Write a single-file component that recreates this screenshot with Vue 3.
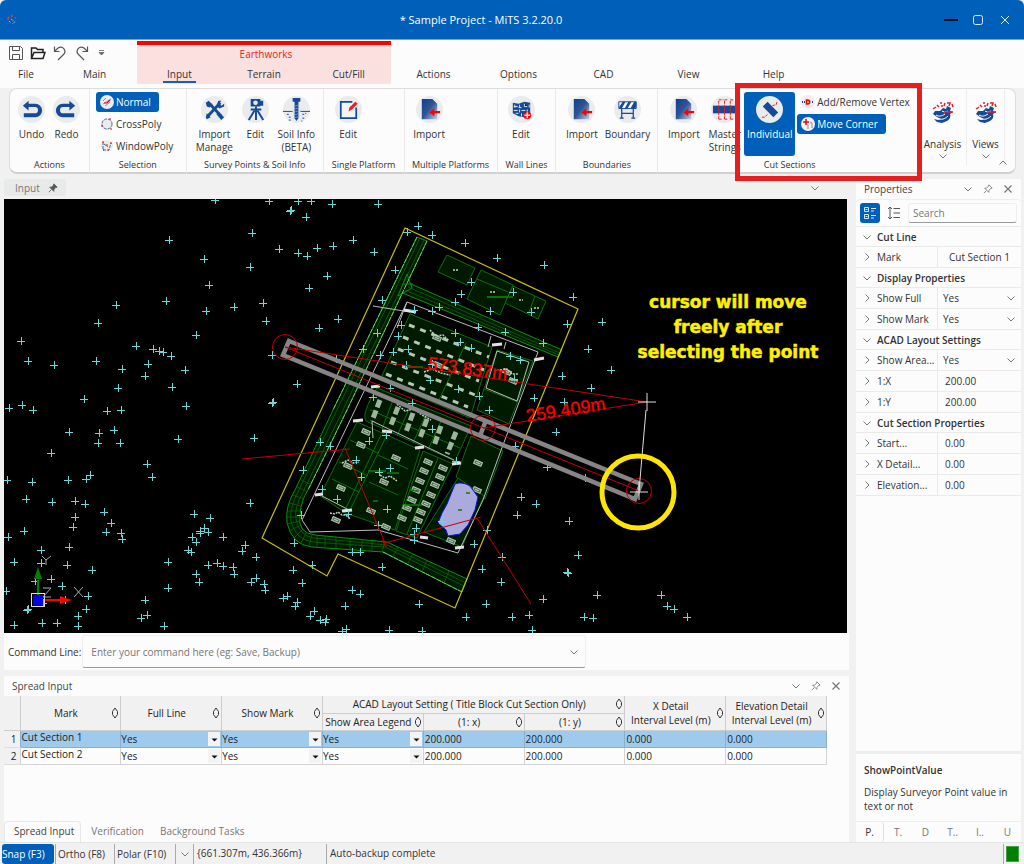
<script setup>
import { ref } from 'vue'

const command = ref('')
const search = ref('')

const tabsLeft = ['File', 'Main']
const tabsContext = ['Input', 'Terrain', 'Cut/Fill']
const tabsRight = ['Actions', 'Options', 'CAD', 'View', 'Help']

const groups = [
  { id: 'actions', label: 'Actions', buttons: [{ icon: 'undo', text: 'Undo' }, { icon: 'redo', text: 'Redo' }] },
  { id: 'selection', label: 'Selection', list: [
    { icon: 'normal', text: 'Normal', on: true },
    { icon: 'cross', text: 'CrossPoly' },
    { icon: 'window', text: 'WindowPoly' }
  ] },
  { id: 'survey-group', label: 'Survey Points & Soil Info', buttons: [
    { icon: 'tools', text: 'Import Manage' },
    { icon: 'tripod', text: 'Edit' },
    { icon: 'soil', text: 'Soil Info (BETA)' }
  ] },
  { id: 'single', label: 'Single Platform', buttons: [{ icon: 'edit', text: 'Edit' }] },
  { id: 'multiple', label: 'Multiple Platforms', buttons: [{ icon: 'import', text: 'Import' }] },
  { id: 'wall', label: 'Wall Lines', buttons: [{ icon: 'wall', text: 'Edit' }] },
  { id: 'bounds', label: 'Boundaries', buttons: [{ icon: 'import', text: 'Import' }, { icon: 'barrier', text: 'Boundary' }] },
  { id: 'master', label: '', buttons: [{ icon: 'import', text: 'Import' }, { icon: 'strings', text: 'Master Strings' }] },
  { id: 'cut', label: 'Cut Sections', buttons: [{ icon: 'individual', text: 'Individual', on: true }], list: [
    { icon: 'vertex', text: 'Add/Remove Vertex' },
    { icon: 'corner', text: 'Move Corner', on: true }
  ] }
]

const properties = [
  { group: 'Cut Line' },
  { name: 'Mark', value: 'Cut Section 1', centered: true },
  { group: 'Display Properties' },
  { name: 'Show Full', value: 'Yes', select: true },
  { name: 'Show Mark', value: 'Yes', select: true },
  { group: 'ACAD Layout Settings' },
  { name: 'Show Area...', value: 'Yes', select: true },
  { name: '1:X', value: '200.00' },
  { name: '1:Y', value: '200.00' },
  { group: 'Cut Section Properties' },
  { name: 'Start...', value: '0.00' },
  { name: 'X Detail...', value: '0.00' },
  { name: 'Elevation...', value: '0.00' }
]

const rows = [
  { mark: 'Cut Section 1', active: true },
  { mark: 'Cut Section 2' }
]
const choices = ['Full Line', 'Show Mark', 'Show Area Legend']
const numbers = ['200.000', '200.000', '0.000', '0.000']

const surveyPoints = [
  215,200,169,240,252,233,204,259,250,267,209,285,116,305,166,301,206,311,234,307,98,323,196,335,21,341,136,346,153,349,159,351,163,352,171,356,28,361,54,365,96,361,148,364,122,369,145,376,185,370,118,388,172,387,84,399,186,406,22,405,9,408,33,410,107,411,121,410,
  69,432,99,433,114,430,98,443,120,443,178,439,254,438,51,453,147,464,152,477,7,480,32,482,68,480,86,479,90,475,26,499,52,502,75,501,85,504,104,512,75,517,111,523,73,527,106,532,121,533,122,539,24,531,8,537,69,547,41,550,14,562,41,563,67,565,92,570,51,579,35,581,62,586,88,596,6,591,86,609,78,616,27,610,28,609,43,603,14,625,42,623,57,623,78,626,250,503,194,514,210,518,204,528,200,531,200,533,208,532,192,537,196,542,223,537,245,545,242,551,256,557,188,550,191,552,168,562,208,565,217,563,223,566,233,567,234,574,196,574,199,582,168,588,251,582,256,578,145,600,141,618,147,615,164,626,65,600,
  269,201,298,201,311,201,332,204,378,204,290,211,291,210,306,217,279,249,298,253,307,256,317,248,333,246,353,240,374,252,395,270,327,276,309,288,263,303,266,321,319,328,338,319,382,300,272,355,297,384,273,402,272,403,418,226,407,232,432,235,414,310,401,325,398,336,377,333,363,349,380,355,393,352,408,349,439,307,432,311,455,302,455,333,406,365,432,364,430,380,390,388,412,403,373,397,458,389,336,359,
  465,243,497,258,544,265,471,282,461,294,513,292,490,311,531,312,573,297,567,324,602,322,478,327,505,332,543,343,588,349,611,370,591,388,562,376,460,342,471,348,510,356,520,360,514,379,479,396,534,398,564,402,489,410,
  320,442,330,446,303,470,322,489,337,499,301,515,348,514,369,441,386,435,356,460,361,477,379,472,390,468,387,509,378,525,416,528,414,534,414,540,294,543,352,552,360,552,382,567,312,565,293,570,302,583,352,590,360,594,345,606,419,604,389,630,422,631,346,629,342,631,264,584,265,590,283,598,287,596,297,602,295,606,314,611,310,616,320,620,326,619,325,622,432,429,456,461,442,521,
  556,432,515,446,547,467,585,478,521,497,536,504,517,515,569,521,487,530,474,544,502,557,578,555,482,569,501,582,567,572,568,573,543,599,597,595,486,604,466,617,512,617,529,615,532,630,584,617,593,618,661,595,667,606,674,609,687,617
]
let crosses = ''
for (let i = 0; i < surveyPoints.length; i += 2) {
  const x = surveyPoints[i]
  const y = surveyPoints[i + 1]
  crosses += `M${x - 4} ${y + 0.5}h8M${x + 0.5} ${y - 4}v8`
}

const lots = [
  [366, 432], [361, 445], [348, 466], [341, 488], [336, 520], [396, 458], [384, 482], [371, 511], [428, 462], [424, 471], [420, 481], [416, 490], [412, 500], [407, 508], [402, 518],
  [443, 468], [440, 477], [435, 485], [431, 495], [426, 504], [421, 512], [418, 520], [386, 527], [478, 463], [477, 490], [451, 541], [507, 372], [513, 381], [438, 365], [437, 338]
]
</script>

<template>
  <div class="app">
    <svg class="defs" aria-hidden="true">
      <defs>
        <linearGradient id="doc" x1="0" y1="0" x2="1" y2="1"><stop offset="0" stop-color="#103f8c" /><stop offset=".5" stop-color="#2d5698" /><stop offset="1" stop-color="#c3cede" /></linearGradient>
        <symbol id="undo" viewBox="0 0 28 28"><path d="M11 5L5 10l6 5v-3.500h6.500a2.800 2.800 0 0 1 0 6.500H6v4h12a7 7 0 0 0 0-14h-7z" fill="#174a94" /></symbol>
        <symbol id="redo" viewBox="0 0 28 28"><path d="M17 5l6 5-6 5v-3.500h-6.500a2.800 2.800 0 0 0 0 6.500H22v4H10a7 7 0 0 1 0-14h7z" fill="#174a94" /></symbol>
        <symbol id="tools" viewBox="0 0 28 28"><path d="M9 8l12 13M20 7L7 21" stroke="#174a94" stroke-width="3" /><path d="M5 7l3-2 4 4-3 3-3-1zM18 5l-2 5 3 3 5-2V8l-3 2-2-2 2-3z" fill="#174a94" /><path d="M18 16l6 6-3 3-5-6zM6 18l4 4-4 2-1-2z" fill="#174a94" /></symbol>
        <symbol id="tripod" viewBox="0 0 28 28"><path d="M9 3h10v2h3v5h-3v1H9zM9 13h11v2H9z" fill="#174a94" /><circle cx="14" cy="7" r="2.400" fill="#e8eaec" /><path d="M13 15L7 25M14.500 11v14M16 15l6 10" stroke="#174a94" stroke-width="2" fill="none" /></symbol>
        <symbol id="soil" viewBox="0 0 28 28"><path d="M0 16h10m8 0h10" stroke="#174a94" /><path d="M10 2h8v4h-2v17l-2 3-2-3V6h-2z" fill="#174a94" /><path d="M11 11l6-2m-6 5l6-2m-6 5l6-2m-6 5l6-2m-6 5l6-2" stroke="#8ba4c8" stroke-width=".8" /><path d="M4 19h2m0 3h2m-2 3h2m12-6h2m1-1h1m-4 5h2m-3 3h1" stroke="#174a94" /></symbol>
        <symbol id="edit" viewBox="0 0 28 28"><path d="M18 6H6v17h16V12" fill="#f2f4f6" stroke="#174a94" stroke-width="1.800" /><path d="M14 16l1-4 6-6 2.500 2-6 6z" fill="#ec1c24" /></symbol>
        <symbol id="import" viewBox="0 0 28 28"><path d="M6 3h11l5 5v16H6z" fill="url(#doc)" /><path d="M25 15.500h-6v-3L14 17l5 4v-3h6z" fill="red" /></symbol>
        <symbol id="wall" viewBox="0 0 28 28"><path d="M5 7l6 1 6-2 6 1v13l-6 2-6-1-6-3z" fill="#174a94" /><path d="M7 9v3m-1-1h4m2-2v3m-1 0h3m3-4v3h3m2-2v3M6 15h4m2-1v3m2-2h4m2-1v3M8 18h3m3 0v3" stroke="#e0e5ed" /><circle cx="20" cy="20" r="4" fill="red" /><path d="M20 17v6m-3-3h6" stroke="#fff" stroke-width="1.500" /></symbol>
        <symbol id="barrier" viewBox="0 0 28 28"><path d="M5 6h18v7H5z" fill="#fff" stroke="#174a94" /><path d="M5 12l4-6h3l-4 7zM11 13l4-7h3l-4 7zM17 13l4-7h2v5l-1 2z" fill="#174a94" /><path d="M8 13v10m12-10v10M8 18h12M6 23h4m8 0h4" stroke="#174a94" stroke-width="1.300" /></symbol>
        <symbol id="strings" viewBox="0 0 28 28"><path d="M2 10h26v8H2z" fill="#174a94" /><path d="M8 24V4h5M14 24V4h4m2 20V4h3M8 24h4m2 0h4m2 0h3" fill="none" stroke="#ec1c24" stroke-dasharray="3 1" /></symbol>
        <symbol id="individual" viewBox="0 0 28 28"><path d="M7 11l5-5 11 11-5 5z" fill="#174a94" /><path d="M17 10l4-1 1-4M6 22h3l3-3" fill="none" stroke="#ec1c24" stroke-dasharray="3 1" /></symbol>
        <symbol id="normal" viewBox="0 0 14 14"><circle cx="7" cy="7" r="7" fill="#ebecef" /><path d="M3 6l3-3m-3 6l8-5M5 11l5-4" stroke="#7b93ba" /><path d="M4 8h3l3-3" stroke="red" stroke-width="1.200" fill="none" /></symbol>
        <symbol id="cross" viewBox="0 0 14 14"><circle cx="7" cy="7" r="6" fill="#eaecee" /><circle cx="7" cy="7" r="5" fill="none" stroke="#5574a8" stroke-dasharray="3 1" /><path d="M9 2h2M1 9h2m7 3h2" stroke="red" /></symbol>
        <symbol id="window" viewBox="0 0 14 14"><circle cx="7" cy="7" r="6" fill="#eaecee" /><path d="M3 3v8h6l2-7M4 5l4 3" fill="none" stroke="#3f65a2" stroke-dasharray="3 1" /><path d="M2 3h2m6 1h2M3 11h1m4 0h1M6 6h2" stroke="red" stroke-width="1.200" /></symbol>
        <symbol id="vertex" viewBox="0 0 14 14"><circle cx="7" cy="7" r="7" fill="#eceeef" /><path d="M1 7h3m7 0h2" stroke="#174a94" stroke-width="2" stroke-dasharray="1 1" /><path d="M5.500 5H7l1.500 1v2L7 9H5.500z" fill="none" stroke="red" stroke-width="1.700" /></symbol>
        <symbol id="corner" viewBox="0 0 14 14"><circle cx="7" cy="7" r="7" fill="#f2f2f4" /><path d="M5 2v6M2 5h6" stroke="red" stroke-width="1.600" /><path d="M9 5l2 1v5M7 8v4" stroke="#7c8cab" fill="none" /></symbol>
        <symbol id="globe" viewBox="0 0 24 24"><path d="M9 11l3-3 3 1 1-3 4 2-1 3 3 1-3 2c1 3 0 5-3 7l-5 2-5-1-3-3 4 1 3-1-4-2-4-3 2-3h4z" fill="#174a94" /><path d="M5 15c3 2 6 1 9-1m-6 5c4 1 7-1 9-3m-6-5c1 1 4 1 6 0" stroke="#fff" fill="none" /><path d="M13 12h9M2 9l3-2m1-2l2 2m1-4h2m-1 3h2m2-3l-1 3m3-3h3l-1 3m3-2l1 3" stroke="#ec1c24" stroke-width="1.500" fill="none" /></symbol>
        <symbol id="chev" viewBox="0 0 10 10"><path d="M1.500 3.500L5 7l3.500-3.500" fill="none" stroke="currentColor" /></symbol>
        <symbol id="pin" viewBox="0 0 12 12"><path d="M7 1l4 4-2 .5L7 8v2L2 5h2l2.500-2zM4 8l-3 3" fill="none" stroke="currentColor" /></symbol>
        <symbol id="close" viewBox="0 0 10 10"><path d="M1.500 1.500l7 7m0-7l-7 7" stroke="currentColor" stroke-width="1.200" /></symbol>
        <symbol id="sort" viewBox="0 0 8 12"><path d="M4 1l2.500 3.500v3L4 11 1.500 7.500v-3z" fill="none" stroke="#333" /></symbol>
      </defs>
    </svg>

    <header class="title">
      <svg class="logo" viewBox="0 0 12 12"><path d="M2 4l2-2m1 0h2m2 1l1 2M1 5h3" stroke="#e33" stroke-width="1.300" stroke-dasharray="2 1" /><path d="M3 7l3 3 4-3M5 5l3 2" stroke="#8fa6dd" fill="none" stroke-dasharray="2 1" /><path d="M5 9l1 1" stroke="red" /></svg>
      <h1>* Sample Project - MiTS 3.2.20.0</h1>
      <div class="window-buttons">
        <button aria-label="Minimize"><svg viewBox="0 0 14 14"><path d="M0 7h14" stroke="#000a20" stroke-width="2" /></svg></button>
        <button aria-label="Maximize"><svg viewBox="0 0 14 14"><rect x="2.500" y="2.500" width="9" height="9" rx="2" fill="none" stroke="#dce8f6" /></svg></button>
        <button aria-label="Close"><svg viewBox="0 0 14 14"><path d="M3 3l8 8m0-8l-8 8" stroke="#e8f0fa" /></svg></button>
      </div>
    </header>

    <nav class="menu">
      <div class="menu-left">
        <div class="quick">
          <button aria-label="Save"><svg viewBox="0 0 16 16"><path d="M1.500 1.500h11l2 2v11h-13zM4.500 1.500v4h7v-4M4.500 14.500v-5h7v5" fill="none" stroke="#555" /></svg></button>
          <button aria-label="Open"><svg viewBox="0 0 16 16"><path d="M1.500 13V3H6l1.500 1.500H13V7M1.500 13.500L4 7.500h11l-2 6z" fill="none" stroke="#222" stroke-width="1.500" /></svg></button>
          <button aria-label="Undo"><svg viewBox="0 0 16 16"><path d="M2.500 1.500v5h5M3 6l3-3c5-3 9 3 5.500 6.500L6 15" fill="none" stroke="#555" stroke-width="1.200" /></svg></button>
          <button aria-label="Redo"><svg viewBox="0 0 16 16"><path d="M13.500 1.500v5h-5M13 6l-3-3C5 0 1 6 4.500 9.500L10 15" fill="none" stroke="#555" stroke-width="1.200" /></svg></button>
          <button aria-label="Customize"><svg viewBox="0 0 16 16"><path d="M3 5.500h5M3 7.500h5L5.500 10z" stroke="#666" fill="#666" stroke-width=".8" /></svg></button>
        </div>
        <div class="tabs"><a v-for="t in tabsLeft" :key="t" href="#">{{ t }}</a></div>
      </div>
      <div class="context">
        <span class="context-name">Earthworks</span>
        <div class="tabs"><a v-for="t in tabsContext" :key="t" href="#" :class="{ current: t === 'Input' }"><span>{{ t }}</span></a></div>
      </div>
      <div class="tabs"><a v-for="t in tabsRight" :key="t" href="#">{{ t }}</a></div>
    </nav>

    <section class="ribbon">
      <div v-for="g in groups" :key="g.id" class="group" :class="g.id">
        <div class="group-body">
          <button v-for="b in g.buttons" :key="b.text" class="big" :class="{ on: b.on }">
            <span class="disc"><svg><use :href="'#' + b.icon" /></svg></span>
            <span>{{ b.text }}</span>
          </button>
          <div v-if="g.list" class="list">
            <button v-for="b in g.list" :key="b.text" :class="{ on: b.on }"><svg><use :href="'#' + b.icon" /></svg>{{ b.text }}</button>
          </div>
        </div>
        <div class="group-label">{{ g.label }}</div>
      </div>
      <div v-for="t in ['Analysis', 'Views']" :key="t" class="drop">
        <button><svg class="globe"><use href="#globe" /></svg><span>{{ t }}</span><svg class="small"><use href="#chev" /></svg></button>
      </div>
      <button class="collapse" aria-label="Collapse ribbon"><svg class="small"><use href="#chev" /></svg></button>
    </section>

    <main class="work">
      <div class="left">
        <div class="doc-tabs">
          <button class="doc-tab">Input <svg viewBox="0 0 12 12"><path d="M7 1l4 4-2 .5L7 8v2L2 5h2l2.500-2z" fill="#555" stroke="#555" /><path d="M4 8l-3 3" stroke="#555" /></svg></button>
          <button class="doc-more" aria-label="Documents"><svg class="small"><use href="#chev" /></svg></button>
        </div>
        <svg class="canvas" viewBox="4 199 843 434" preserveAspectRatio="xMinYMin slice">
          <g class="road">
            <path d="M417 237L333 410 295 490Q285 506 287 523 292 545 312 547L383 552 462 592 467 579 387 542 315 535Q297 533 300 515 301 500 308 490L347 410 427 241z" />
            <path d="M411 284L562 350 558 357 400 292z" />
            <path d="M407 274L412 288 398 296zM403 284h10" />
          </g>
          <path class="lane" d="M420 238L336 412 298 492Q289 508 291 522 296 540 313 542L385 547 464 586M424 240L342 412 303 492Q294 508 296 519 299 536 314 538L387 545 466 583M408 287L560 353M405 290L559 355" />
          <path class="bright" d="M417 237L333 410M427 241L347 410 308 490M383 552L462 592" />
          <path class="ribs" d="M301 480l11 5M297 487l11 5M293 495l11 4M289 503l12 3M287 511h13M286 517h13M287 524l13-3M289 531l12-6M294 538l9-9M301 543l5-10M309 546l3-11M317 547v-12M325 548v-12M336 549v-12M350 550v-12M362 551v-12M372 551v-12M382 552l3-10M393 557l5-10M408 563l5-10M422 572l5-12M444 583l5-12" />
          <g class="plot">
            <path d="M447 255L475 268 467 285 438 272z" />
            <path d="M481 270L513 285 500 315 467 299zM477 279L508 292M487 297h26" />
            <path d="M513 286L546 301 538 319 505 303zM535 296L529 312" />
            <path d="M410 314L492 347 470 418 380 380z" />
            <path d="M497 350L533 361 509 424 477 410z" />
            <path d="M377 388L471 426 455 461 366 421Q361 414 377 388z" />
            <path d="M357 422L387 435 349 515 320 496z" />
            <path d="M387 435L420 450 395 530 348 514z" />
            <path d="M423 451L453 464 417 538 396 531z" />
            <path d="M471 436L503 451 485 499 456 477z" />
            <path d="M458 478L484 496 462 547 424 532z" />
            <path d="M350 440L378 453M339 462L368 476M332 479L359 492M381 435L344 512M378 455L408 469M369 482L398 495M438 458L407 534M393 400L382 429M410 407L397 436M426 414L413 443M441 421L428 450M370 410L460 448M466 343L438 402M484 389L518 402" />
          </g>
          <path class="site" d="M407 302L538 352 500 453 483 500 458 553 378 530 310 532 302 520 407 302M407 302L397 328M373 306L410 312M373 438L372 421 454 460M322 496L349 510M491 336L488 347M506 342L504 349M497 351L486 388 517 401 529 362z" />
          <path class="cars" d="M409 325L489 357M403 337L484 370M398 349L479 381M391 362L475 395M386 374L468 407" />
          <path class="trucks" d="M380 400L372 421M398 407L391 425M413 413L406 432M427 419L420 438M441 426L434 446M456 432L447 454" />
          <path class="tags" d="M404 310l12 2M492 345l10-1M534 360l10-2M371 387l9-1M353 421l10-1M382 431l10 1M415 448l9-1M452 464l9-1M315 495l8-1M342 511l10-1M420 537l8 1M455 548l9-1" />
          <g class="lots"><path v-for="(p, i) in lots" :key="i" :transform="`translate(${p[0]} ${p[1]}) rotate(24)`" d="M-4-2h8v4h-8zM-2 0h4" /></g>
          <path class="scribble" d="M330 513l5 1 3-2 4 3 4 0 4 4M342 463l6-3 5 3 6-1M380 475l5 3 5-2 7 5M430 330l6 6 7-1 6 6M424 372l8-3 9 4 9 2M500 370l7-1 5 5 6 0M397 404l8 7 9-2 8 6 9 5" />
          <path class="greens" d="M368 471h18m1 2h12M404 505h18M373 501h5M487 297h26M405 367h18M410 490l8 1M455 510h4M468 492h3" />
          <path class="scribble" d="M453 270h5M490 292h5M519 300h4M534 308h5" />
          <path class="lake" d="M455 484Q462 481 470 486L478 497 475 510 468 525 460 534 448 536 446 530 438 523 442 513 447 504z" />
          <path class="greens" d="M458 510h4M466 493h4" />
          <path class="boundary" d="M405 228L578 309 455 608 338 554 327 576 262 538z" />
          <path class="survey" :d="crosses" />
          <path class="section" d="M289 341L641 484 635 499 283 355zM486 420L480 436" />
          <g class="measure">
            <circle cx="285" cy="347" r="12.500" /><circle cx="483" cy="428" r="12.500" /><circle cx="639" cy="491" r="12.500" />
            <path d="M285 347L639 491M285 347L647 402 483 428M242 459L350 449M345 448L385 543 481 517M477 518L531 604M382 540l4 7" />
          </g>
          <path class="cursor" d="M638 402h18M647 393v18M646 410L639 491M630 492h18M639 482v18" />
          <text class="dim" transform="translate(427 369) rotate(8)">573.837m</text>
          <text class="dim" transform="translate(527 422) rotate(-9)">259.409m</text>
          <circle class="ring" cx="638" cy="492" r="36" />
          <text class="note"><tspan x="728" y="308">cursor will move</tspan><tspan x="728" y="333">freely after</tspan><tspan x="728" y="358">selecting the point</tspan></text>
          <path d="M38 600V580" stroke="#008000" stroke-width="2" /><path d="M38 567l-4 12h8z" fill="#008000" />
          <path d="M44 600h18" stroke="red" stroke-width="2" /><path d="M72 600l-12-4v8z" fill="red" />
          <rect x="31.500" y="593.500" width="13" height="13" fill="none" stroke="#ddd" /><rect x="33" y="595" width="10" height="10" fill="#0000f0" />
          <path class="axes" d="M42 556l4 4 5-4M46 560v5M74 587l9 10m0-10l-9 10M43 588h8l-8 9h8" />
        </svg>
        <div class="command">
          <label for="command">Command Line:</label>
          <div class="command-box"><input id="command" v-model="command" placeholder="Enter your command here (eg: Save, Backup)"><button aria-label="Command history"><svg class="small"><use href="#chev" /></svg></button></div>
        </div>
        <section class="spread">
          <div class="panel-head"><h2>Spread Input</h2><button aria-label="Menu"><svg><use href="#chev" /></svg></button><button aria-label="Pin"><svg><use href="#pin" /></svg></button><button aria-label="Close"><svg><use href="#close" /></svg></button></div>
          <div class="table-wrap">
            <table>
              <colgroup><col class="index"><col v-for="n in 8" :key="n"></colgroup>
              <thead>
                <tr>
                  <th rowspan="2"></th>
                  <th v-for="h in ['Mark', 'Full Line', 'Show Mark']" :key="h" rowspan="2"><div>{{ h }}<svg><use href="#sort" /></svg></div></th>
                  <th colspan="3"><div>ACAD Layout Setting ( Title Block Cut Section Only)<svg><use href="#sort" /></svg></div></th>
                  <th rowspan="2"><div>X Detail<br>Interval Level (m)<svg><use href="#sort" /></svg></div></th>
                  <th rowspan="2"><div>Elevation Detail<br>Interval Level (m)<svg><use href="#sort" /></svg></div></th>
                </tr>
                <tr><th v-for="h in ['Show Area Legend', '(1: x)', '(1: y)']" :key="h"><div>{{ h }}<svg><use href="#sort" /></svg></div></th></tr>
              </thead>
              <tbody>
                <tr v-for="(r, i) in rows" :key="r.mark" :class="{ active: r.active }">
                  <th>{{ i + 1 }}</th>
                  <td class="mark">{{ r.mark }}</td>
                  <td v-for="c in choices" :key="c" class="choice"><div class="pick"><select :aria-label="c"><option>Yes</option><option>No</option></select><svg viewBox="0 0 12 14"><path d="M3.500 6.500h6l-3 3z" fill="#111" /></svg></div></td>
                  <td v-for="(n, k) in numbers" :key="k">{{ n }}</td>
                </tr>
              </tbody>
            </table>
          </div>
          <div class="bottom-tabs"><a href="#" class="current">Spread Input</a><a href="#">Verification</a><a href="#">Background Tasks</a></div>
        </section>
      </div>

      <aside class="props">
        <div class="panel-head"><h2>Properties</h2><button aria-label="Menu"><svg><use href="#chev" /></svg></button><button aria-label="Pin"><svg><use href="#pin" /></svg></button><button aria-label="Close"><svg><use href="#close" /></svg></button></div>
        <div class="props-tools">
          <button class="cat" aria-label="Categorized"><svg viewBox="0 0 14 14"><path d="M1.500 1.500h4v4h-4zM1.500 8.500h4v4h-4zM8 2.500h5M8 5h3M8 9.500h5M8 12h3M2.500 3.500h2m-2 7h2" stroke="#d9e7f7" fill="none" /></svg></button>
          <button class="alpha" aria-label="Alphabetical"><svg viewBox="0 0 14 14"><path d="M3 1v12M1 3l2-2 2 2M1 11l2 2 2-2M6.500 2.500H13M6.500 7H13M6.500 11.500H13" stroke="#555" fill="none" /></svg></button>
          <input v-model="search" placeholder="Search" aria-label="Search properties">
        </div>
        <div class="props-list">
          <template v-for="p in properties" :key="p.group || p.name">
            <div v-if="p.group" class="prop-group"><svg class="small"><use href="#chev" /></svg>{{ p.group }}</div>
            <div v-else class="prop">
              <span class="prop-name"><svg class="small closed"><use href="#chev" /></svg>{{ p.name }}</span>
              <span v-if="p.select" class="prop-select"><select :aria-label="p.name"><option>Yes</option><option>No</option></select><svg class="small"><use href="#chev" /></svg></span>
              <span v-else class="prop-value" :class="{ centered: p.centered }">{{ p.value }}</span>
            </div>
          </template>
        </div>
        <div class="help"><h3>ShowPointValue</h3><p>Display Surveyor Point value in text or not</p></div>
        <div class="side-tabs"><a href="#" class="current">P.</a><a href="#">T.</a><a href="#">D</a><a href="#">T..</a><a href="#">I..</a><a href="#">U</a></div>
      </aside>
    </main>

    <footer class="status">
      <button class="snap">Snap (F3)</button>
      <button class="ortho">Ortho (F8)</button>
      <button class="polar">Polar (F10)</button>
      <button class="more" aria-label="Polar options"><svg class="small"><use href="#chev" /></svg></button>
      <span class="coords">{661.307m, 436.366m}</span>
      <span class="message">Auto-backup complete</span>
      <span class="lamp"><i></i></span>
    </footer>
  </div>
</template>

<style>
body { background: #f1f1f1; }
</style>

<style scoped>
* { box-sizing: border-box; }
.app { min-height: 100vh; display: flex; flex-direction: column; background: #f1f1f1; color: #333; font: 10px/14px "Open Sans", "Noto Sans", sans-serif; }
.defs { position: absolute; width: 0; height: 0; }
button, input, select { font: inherit; color: inherit; border: 0; background: none; padding: 0; margin: 0; outline: 0; }
select { appearance: none; }
a { color: inherit; text-decoration: none; }
h1, h2, h3, p { margin: 0; font: inherit; }
svg { display: block; flex: none; }
.small { width: 10px; height: 10px; color: #777; }

.title { height: 40px; display: flex; align-items: center; justify-content: space-between; background: #005fb8; border-bottom: 1px solid #6ea3d6; color: #fff; padding: 0 12px 0 6px; border-radius: 6px 6px 0 0; }
.title h1 { font-size: 11px; }
.logo { width: 12px; height: 12px; }
.window-buttons { display: flex; gap: 13px; }
.window-buttons svg { width: 14px; height: 14px; }

.menu { display: flex; height: 48px; background: #fcfcfc; align-items: flex-end; }
.menu-left { width: 137px; height: 48px; padding-top: 5px; }
.quick { display: flex; align-items: flex-start; gap: 6px; padding-left: 8px; height: 19px; }
.quick svg { width: 16px; height: 16px; }
.tabs { display: flex; height: 24px; }
.tabs a { width: 85px; text-align: center; padding-top: 3px; }
.menu-left .tabs a:first-child { width: 52px; }
.context { width: 254px; height: 43px; margin-bottom: 4px; background: #fbe0e0; border-top: 4px solid red; display: flex; flex-direction: column; justify-content: space-between; }
.context .tabs { height: 20px; }
.context-name { color: #f02020; text-align: center; padding-top: 2px; padding-left: 4px; }
.current span { display: inline-block; border-bottom: 2px solid #1860b4; padding: 0 4px; height: 16px; }

.ribbon { display: grid; grid-template-columns: 80fr 97fr 137fr 81fr 93fr 59fr 102fr 81fr 180fr 48fr 38fr 10fr; height: 86px; margin: 0 8px 5px 9px; background: #fcfcfc; border: 1px solid #ddd; border-bottom: 2px solid #d0d0d0; border-radius: 8px; }
.ribbon > * { min-width: 0; }
.group { position: relative; display: flex; flex-direction: column; border-right: 1px solid #e9e9e9; }
.group-body { flex: 1; display: flex; padding: 3px 0 0 4px; }
.group-label { height: 17px; text-align: center; white-space: nowrap; font-size: 9px; line-height: 18px; }
.big { width: 41px; height: 64px; padding-top: 4px; display: flex; flex-direction: column; align-items: center; gap: 5px; line-height: 13px; flex: none; }
.actions .big { width: 35px; }
.survey-group .group-body { padding-left: 7px; }
.wall .group-body { padding-left: 3px; }
.bounds .group-body, .master .group-body { padding-left: 5px; }
.bounds .big + .big { width: 50px; }
.disc { width: 27px; height: 27px; border-radius: 50%; background: #e9ebec; flex: none; }
.disc svg { width: 27px; height: 27px; }
.list { display: flex; flex-direction: column; align-items: flex-start; gap: 2px; }
.list button { height: 20px; display: flex; align-items: center; gap: 2px; padding: 0 8px 0 4px; white-space: nowrap; border-radius: 3px; }
.list svg { width: 14px; height: 14px; }
.selection .group-body { padding-left: 6px; }
.on { background: #005fb8; color: #fff; border-radius: 3px; }
.cut .group-body { padding-left: 5px; gap: 2px; }
.cut .big { width: 51px; }
.cut .group-label { padding-right: 78px; }
.cut::after { content: ""; position: absolute; inset: -6px -4px -8px -4px; border: 5px solid #e81e1e; pointer-events: none; }
.drop { border-right: 1px solid #eee; display: flex; justify-content: center; margin-bottom: 8px; }
.drop button { display: flex; flex-direction: column; align-items: center; padding-top: 11px; }
.globe { width: 24px; height: 24px; margin-bottom: 13px; }
.collapse { align-self: end; justify-self: end; transform: rotate(180deg); margin: 0 7px 5px -12px; }

.work { flex: 1; display: flex; gap: 7px; padding: 0 3px 0 4px; }
.left { flex: 1; min-width: 0; display: flex; flex-direction: column; }
.doc-tabs { display: flex; height: 20px; justify-content: space-between; align-items: flex-start; padding-right: 29px; }
.doc-tab { display: flex; align-items: center; gap: 8px; background: #e8eae9; color: #777; height: 17px; padding: 0 8px 0 11px; border-radius: 3px; }
.doc-tab svg { width: 10px; height: 10px; }
.doc-more { padding-top: 4px; }
.canvas { flex: 1 1 434px; min-height: 434px; width: calc(100% - 2px); background: #000; border: 0; }
.road path { fill: #001a00; stroke: #079407; }
.lane, .ribs { fill: none; stroke: #087008; stroke-width: .7; }
.bright { fill: none; stroke: #6dcf6d; stroke-width: 1; stroke-dasharray: 5 1; }
.plot { fill: #001a00; stroke: #087008; }
.site { fill: none; stroke: #bcbcbc; }
.cars { stroke: #b3c9b3; stroke-width: 3; stroke-dasharray: 6 6; fill: none; }
.trucks { stroke: #9db59d; stroke-width: 5; stroke-dasharray: 8 3; fill: none; }
.tags { stroke: #e2e2e2; stroke-width: 3; }
.lots { fill: #56745c; stroke: #b5ccb5; }
.scribble { fill: none; stroke: #c0d2c0; stroke-width: 1.500; stroke-dasharray: 2 1; }
.greens { fill: none; stroke: #078007; stroke-width: 1.500; }
.lake { fill: #aaaadc; stroke: #1010e8; }
.boundary { fill: none; stroke: #c9bd12; stroke-width: 1.200; }
.survey { stroke: #6fd6d8; fill: none; }
.section { fill: none; stroke: #858585; stroke-width: 4.500; }
.measure { fill: none; stroke: #c40000; }
.cursor { fill: none; stroke: #ddd; }
.dim { font: 18px "Liberation Sans", Arial, sans-serif; fill: red; stroke: red; stroke-width: .3; }
.ring { fill: none; stroke: #ffe600; stroke-width: 5; }
.note { font: bold 17px "DejaVu Sans", sans-serif; fill: #fff000; stroke: #fff000; stroke-width: .5; text-anchor: middle; }
.axes { fill: none; stroke: #aaa; }

.command { height: 37px; background: #fcfcfc; display: flex; align-items: stretch; gap: 1px; padding: 2px 0 2px 4px; }
.command label { align-self: center; }
.command-box { display: flex; align-items: center; width: 504px; border: 1px solid #eee; border-bottom: 1px solid #999; border-radius: 3px; padding: 0 6px 0 8px; }
.command-box input { flex: 1; }
input::placeholder { color: #777; opacity: 1; }

.panel-head { display: flex; align-items: center; height: 20px; padding: 0 8px; color: #777; }
.panel-head h2 { flex: 1; color: #444; }
.panel-head button { margin-left: 10px; }
.panel-head svg { width: 10px; height: 10px; }
.spread { margin-top: 6px; height: 166px; background: #fcfcfc; display: flex; flex-direction: column; }
.table-wrap { flex: 1; overflow: hidden; }
table { width: 823px; border-collapse: collapse; table-layout: fixed; color: #222; }
.index { width: 16px; }
thead th { background: #f1f1f1; border: 1px solid #cdcdcd; border-top: 0; font-weight: 400; padding: 0; line-height: 14px; height: 17px; }
thead th:first-child { border-left: 0; }
thead tr + tr th:first-child { border-left: 1px solid #cdcdcd; }
thead div { position: relative; padding-right: 9px; white-space: nowrap; }
thead div svg { position: absolute; right: 1px; top: calc(50% - 6px); width: 8px; height: 12px; }
tbody th { background: #f1f1f1; font-weight: 400; padding: 0; text-align: right; padding-right: 3px; border-bottom: 1px solid #ddd; }
td { border: 1px solid #d3d3d3; padding: 0 0 0 1px; height: 17px; line-height: 16px; }
.choice { padding: 0 1px 0 0; }
.mark { line-height: 12px; vertical-align: top; }
.active td { background: #9ecaed; border-color: #88afd0; }
.pick { position: relative; display: flex; }
.pick select { flex: 1; height: 15px; }
.pick svg { position: absolute; right: 0; top: 1px; width: 12px; height: 14px; background: #f3f3f3; pointer-events: none; }
.bottom-tabs { display: flex; height: 21px; color: #777; }
.bottom-tabs a { padding: 3px 6px 0 10px; }
.bottom-tabs .current { color: #444; border: 1px solid #e8e8e8; border-bottom: 0; border-radius: 4px 4px 0 0; padding: 2px 6px 0 9px; }

.props { width: 165px; background: #fcfcfc; display: flex; flex-direction: column; }
.props-tools { display: flex; align-items: center; gap: 4px; height: 27px; padding: 0 4px; border-top: 1px solid #eee; border-radius: 4px; }
.props-tools button { width: 20px; height: 20px; display: grid; place-items: center; flex: none; }
.props-tools svg { width: 14px; height: 14px; }
.props-tools .cat { background: #005fb8; border-radius: 3px; }
.props-tools input { flex: 1; min-width: 0; height: 20px; border: 1px solid #eee; border-bottom-color: #999; border-radius: 3px; padding-left: 4px; }
.props-list { flex: 1; }
.prop-group { display: flex; align-items: center; gap: 5px; height: 20px; padding-left: 6px; font-weight: 600; border-top: 1px solid #eaeaea; }
.prop { display: grid; grid-template-columns: 82px 1fr; height: 21px; border-top: 1px solid #eaeaea; line-height: 20px; }
.prop:last-child { border-bottom: 1px solid #eaeaea; height: 22px; }
.prop-name { display: flex; align-items: center; gap: 5px; padding-left: 6px; border-right: 1px solid #eaeaea; white-space: nowrap; }
.closed { transform: rotate(-90deg); }
.prop-value { padding-left: 7px; }
.centered { padding-left: 11px; white-space: nowrap; }
.prop-select { display: flex; align-items: center; padding: 0 5px; }
.prop-select select { flex: 1; }
.help { border-top: 3px solid #eee; padding: 9px 8px 0; height: 70px; }
.help h3 { font-weight: 600; margin-bottom: 8px; }
.side-tabs { display: flex; height: 21px; border-top: 1px solid #eee; color: #777; }
.side-tabs a { flex: 1; text-align: center; padding-top: 3px; }
.side-tabs .current { color: #333; border-right: 1px solid #e0e0e0; border-radius: 3px; }

.status { height: 22px; display: flex; border-top: 1px solid #e5e5e5; padding: 1px 3px 0 2px; line-height: 18px; white-space: nowrap; }
.status > * { border-left: 1px solid #aaa; }
.status .snap { background: #005fb8; color: #fff; width: 52px; border: 0; border-radius: 3px; text-align: left; margin-right: 1px; }
.ortho { width: 59px; text-align: left; padding-left: 2px; }
.polar { width: 61px; text-align: left; padding-left: 2px; }
.more { width: 18px; display: grid; place-items: center; }
.coords { width: 133px; padding-left: 3px; }
.message { flex: 1; padding-left: 3px; }
.lamp { padding: 2px 2px; }
.lamp i { display: block; width: 13px; height: 16px; background: #008000; border: 1px solid #45a045; }
</style>
